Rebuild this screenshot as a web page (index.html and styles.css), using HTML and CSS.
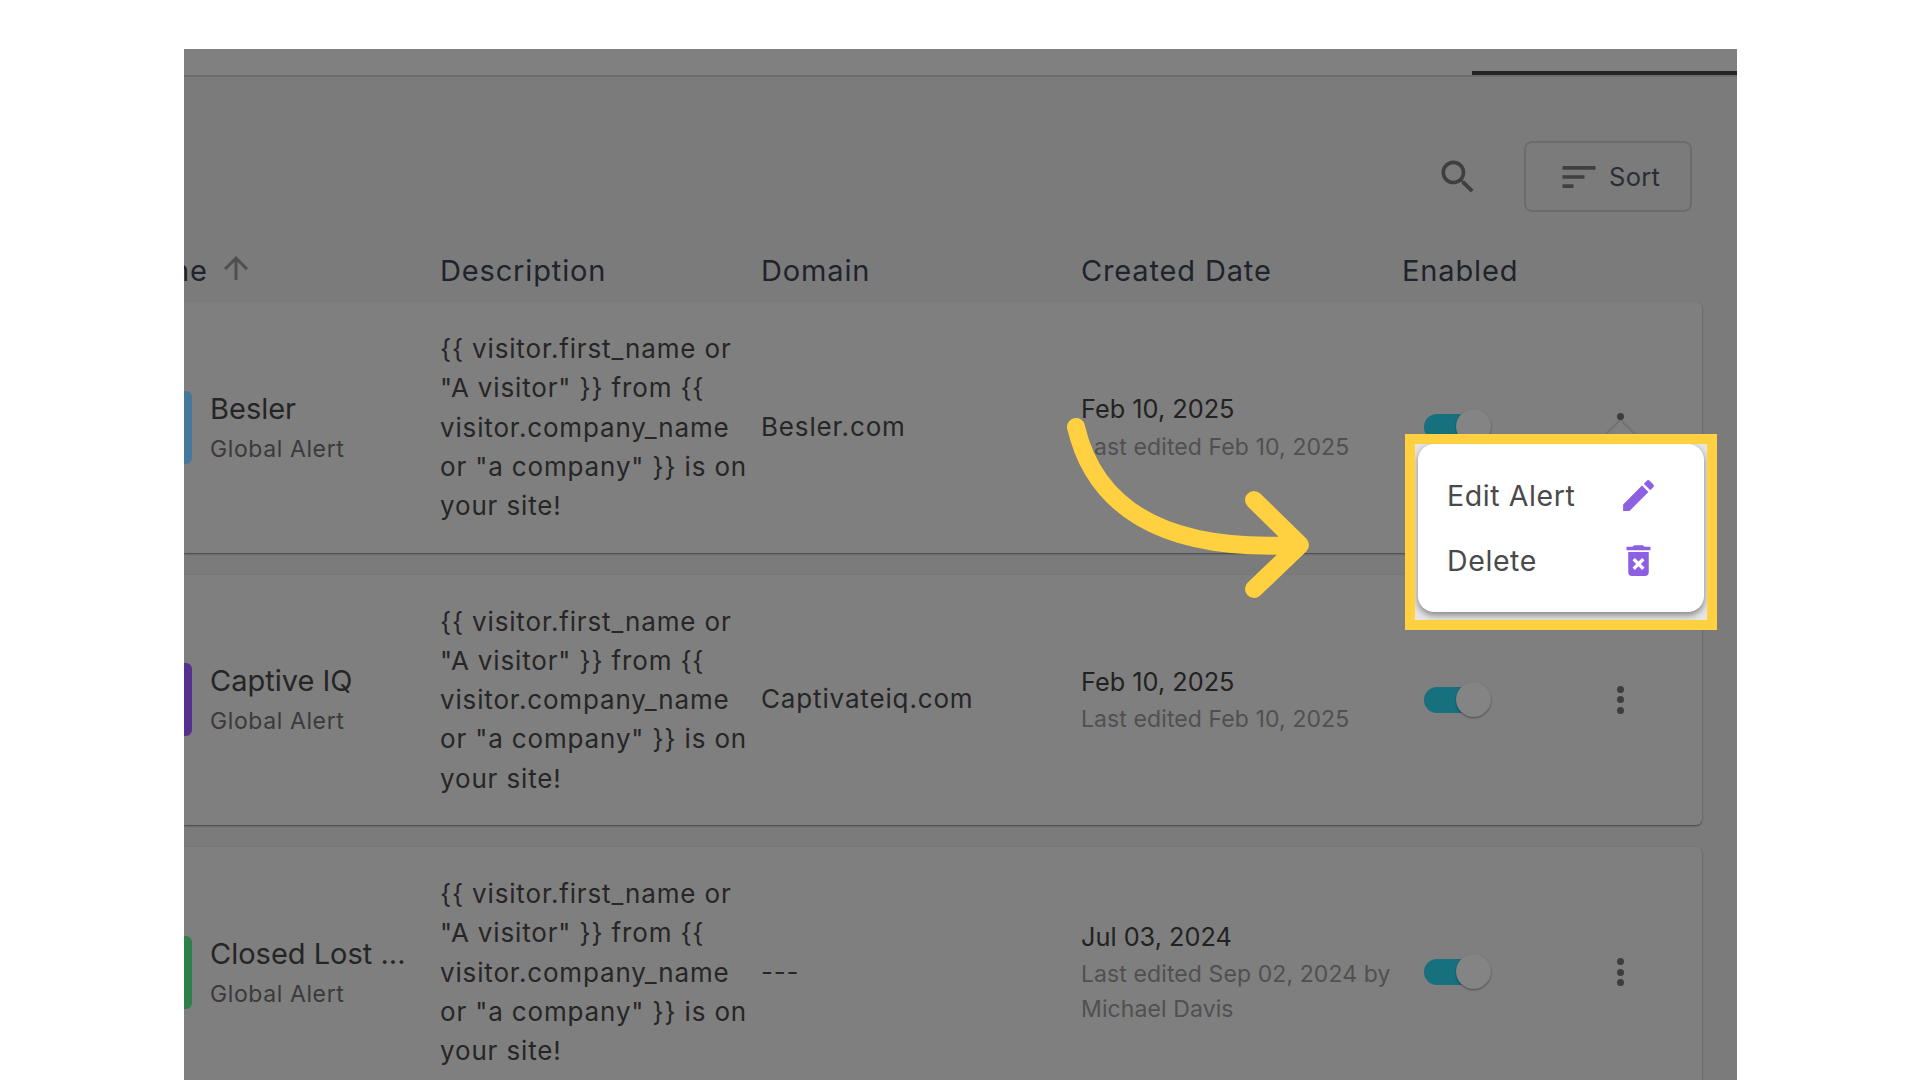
FILE: index.html
```html
<!DOCTYPE html>
<html>
<head>
    <title>Alerts</title>
    <link rel="stylesheet" href="styles.css">
</head>
<body>
    <div class="frame">
        <div class="tabs">
            <div class="tab-active"></div>
        </div>

        <div class="toolbar">
            <svg class="search-icon" viewBox="0 0 24 24"><path d="M15.5 14h-.79l-.28-.27C15.41 12.59 16 11.11 16 9.5 16 5.91 13.09 3 9.5 3S3 5.91 3 9.5 5.91 16 9.5 16c1.61 0 3.09-.59 4.23-1.57l.27.28v.79l5 4.99L20.49 19l-4.99-5zm-6 0C7.01 14 5 11.99 5 9.5S7.01 5 9.5 5 14 7.01 14 9.5 11.99 14 9.5 14z"/></svg>
            <button class="sort-btn">
                <svg class="sort-icon" viewBox="0 0 24 24"><path d="M3 6h18v2H3zM3 11h12v2H3zM3 16h6v2H3z"/></svg>
                <span>Sort</span>
            </button>
        </div>

        <div class="table-head">
            <div class="head-name">
                <span class="head-name-text">Name</span>
                <svg class="head-arrow" viewBox="0 0 24 24"><path d="M4 12l1.41 1.41L11 7.83V20h2V7.83l5.58 5.59L20 12l-8-8-8 8z"/></svg>
            </div>
            <div>Description</div>
            <div>Domain</div>
            <div>Created Date</div>
            <div>Enabled</div>
        </div>

        <div class="card">
            <div class="name-cell">
                <div class="bar bar-blue"></div>
                <div>
                    <div class="name">Besler</div>
                    <div class="sub">Global Alert</div>
                </div>
            </div>
            <div class="desc">{{ visitor.first_name or<br>"A visitor" }} from {{<br>visitor.company_name<br>or "a company" }} is on<br>your site!</div>
            <div class="domain">Besler.com</div>
            <div>
                <div class="date">Feb 10, 2025</div>
                <div class="edited">Last edited Feb 10, 2025</div>
            </div>
            <div class="toggle"><div class="knob"></div></div>
            <div class="kebab"><span></span><span></span><span></span></div>
        </div>

        <div class="card">
            <div class="name-cell">
                <div class="bar bar-purple"></div>
                <div>
                    <div class="name">Captive IQ</div>
                    <div class="sub">Global Alert</div>
                </div>
            </div>
            <div class="desc">{{ visitor.first_name or<br>"A visitor" }} from {{<br>visitor.company_name<br>or "a company" }} is on<br>your site!</div>
            <div class="domain">Captivateiq.com</div>
            <div>
                <div class="date">Feb 10, 2025</div>
                <div class="edited">Last edited Feb 10, 2025</div>
            </div>
            <div class="toggle"><div class="knob"></div></div>
            <div class="kebab"><span></span><span></span><span></span></div>
        </div>

        <div class="card">
            <div class="name-cell">
                <div class="bar bar-green"></div>
                <div>
                    <div class="name">Closed Lost ...</div>
                    <div class="sub">Global Alert</div>
                </div>
            </div>
            <div class="desc">{{ visitor.first_name or<br>"A visitor" }} from {{<br>visitor.company_name<br>or "a company" }} is on<br>your site!</div>
            <div class="domain">---</div>
            <div>
                <div class="date">Jul 03, 2024</div>
                <div class="edited">Last edited Sep 02, 2024 by<br>Michael Davis</div>
            </div>
            <div class="toggle"><div class="knob"></div></div>
            <div class="kebab"><span></span><span></span><span></span></div>
        </div>

        <div class="popper-arrow"></div>

        <div class="highlight">
            <div class="menu">
                <div class="menu-item">
                    <span>Edit Alert</span>
                    <svg class="menu-icon" viewBox="0 0 24 24"><path d="M3 17.25V21h3.75L17.81 9.94l-3.75-3.75L3 17.25zM20.71 7.04c.39-.39.39-1.02 0-1.41l-2.34-2.34c-.39-.39-1.02-.39-1.41 0l-1.83 1.83 3.75 3.75 1.83-1.83z"/></svg>
                </div>
                <div class="menu-item">
                    <span>Delete</span>
                    <svg class="menu-icon" viewBox="0 0 24 24"><path d="M6 19c0 1.1.9 2 2 2h8c1.1 0 2-.9 2-2V7H6v12zm2.46-7.12l1.41-1.41L12 12.59l2.12-2.12 1.41 1.41L13.41 14l2.12 2.12-1.41 1.41L12 15.41l-2.12 2.12-1.41-1.41L10.59 14l-2.13-2.12zM15.5 4l-1-1h-5l-1 1H5v2h14V4z"/></svg>
                </div>
            </div>
        </div>

        <svg class="callout-arrow" viewBox="0 0 270 210">
            <path d="M22 18C40 95 105 143 240 136M200 91L246 136L200 180"/>
        </svg>
    </div>
</body>
</html>
```

FILE: styles.css
```css
html, body {
    height: 100%;
}
body {
    margin: 0;
    background: white;
    overflow: hidden;
    font-family: Inter, "Noto Sans", sans-serif;
}
.frame {
    position: relative;
    width: 1553px;
    height: 1031px;
    margin: 49px 0 0 184px;
    background: #7b7b7b;
    overflow: hidden;
}
.tabs {
    display: flex;
    justify-content: flex-end;
    height: 28px;
    background: #808080;
    border-bottom: 2px solid #6d6d6d;
    box-sizing: border-box;
}
.tab-active {
    width: 265px;
    height: 26px;
    border-bottom: 4px solid #252525;
    box-sizing: border-box;
}
.toolbar {
    display: flex;
    align-items: center;
    justify-content: flex-end;
    padding: 64px 45px 0 0;
}
.search-icon {
    width: 44px;
    height: 44px;
    fill: #3f3f3f;
    margin-right: 44px;
}
.sort-btn {
    display: flex;
    align-items: center;
    width: 168px;
    height: 71px;
    padding: 0 0 0 31px;
    background: none;
    border: 2px solid #6c6c6c;
    border-radius: 8px;
    color: #2b2d35;
    font: 400 25.5px Inter, sans-serif;
    letter-spacing: 0.3px;
}
.sort-icon {
    width: 44px;
    height: 44px;
    fill: #404040;
    margin-right: 8px;
}
.table-head {
    display: grid;
    grid-template-columns: 256px 321px 320px 321px 200px;
    align-items: center;
    width: 1518px;
    height: 90px;
    padding-top: 27px;
    box-sizing: border-box;
    color: #20232c;
    font-size: 29px;
    letter-spacing: 0.85px;
}
.head-name {
    display: flex;
    align-items: center;
    margin-left: -60px;
}
.head-name-text {
    margin-right: 10px;
}
.head-arrow {
    width: 36px;
    height: 36px;
    fill: #4f4f4f;
    margin-top: -6px;
}
.card {
    display: grid;
    grid-template-columns: 256px 321px 320px 343px 178px 36px;
    align-items: center;
    width: 1518px;
    height: 250.5px;
    margin-bottom: 22px;
    background: #7f7f7f;
    border-radius: 0 6px 6px 0;
    box-shadow: 0 1px 2px rgba(0,0,0,0.45);
}
.name-cell {
    display: flex;
    align-items: center;
    gap: 18px;
}
.bar {
    width: 8px;
    height: 73px;
    border-radius: 0 6px 6px 0;
}
.bar-blue {
    background: #44799b;
}
.bar-purple {
    background: #55308c;
}
.bar-green {
    background: #2f7f4b;
}
.name {
    color: #252525;
    font-size: 29px;
    line-height: 40px;
}
.sub {
    color: #3a3a3a;
    font-size: 23px;
    letter-spacing: 0.6px;
    line-height: 34px;
    margin-top: 3px;
}
.desc {
    color: #262626;
    font-size: 26px;
    letter-spacing: 0.85px;
    line-height: 39.3px;
    white-space: nowrap;
}
.domain {
    color: #262626;
    font-size: 26px;
    letter-spacing: 0.85px;
    padding-bottom: 2px;
}
.date {
    color: #222;
    font-size: 25.3px;
    line-height: 36px;
    margin-top: 1.6px;
}
.edited {
    color: #505050;
    font-size: 23px;
    letter-spacing: 0.1px;
    line-height: 35px;
    margin-top: 2.2px;
    white-space: nowrap;
}
.toggle {
    position: relative;
    width: 56px;
    height: 26px;
    background: #16707e;
    border-radius: 13px;
}
.knob {
    position: absolute;
    left: 32px;
    top: -5px;
    width: 35px;
    height: 35px;
    background: #848484;
    border-radius: 50%;
    box-shadow: 0 1px 2px rgba(0,0,0,0.4);
}
.kebab {
    display: flex;
    flex-direction: column;
    align-items: center;
    gap: 3.5px;
}
.kebab span {
    width: 7px;
    height: 7px;
    background: #3d3d3d;
    border-radius: 50%;
}
.popper-arrow {
    position: absolute;
    left: 1426px;
    top: 376px;
    width: 21px;
    height: 21px;
    background: #808080;
    transform: rotate(45deg);
    box-shadow: -1px -1px 2px rgba(0,0,0,0.2);
}
.highlight {
    position: absolute;
    left: 1221px;
    top: 385px;
    width: 312px;
    height: 196px;
    box-sizing: border-box;
    border: 10px solid #ffd03f;
    background: #e6e6e6;
    overflow: hidden;
}
.menu {
    height: 168px;
    margin: 0 3px;
    padding: 19px 45px 19px 29px;
    box-sizing: border-box;
    background: white;
    border-radius: 16px;
    box-shadow: 0 3px 7px rgba(0,0,0,0.45);
}
.menu-item {
    display: flex;
    align-items: center;
    justify-content: space-between;
    height: 65px;
    color: #4a4a4a;
    font-size: 28.5px;
    letter-spacing: 0.6px;
}
.menu-icon {
    width: 41px;
    height: 41px;
    fill: #8c5fe3;
}
.callout-arrow {
    position: absolute;
    left: 870px;
    top: 360px;
    width: 270px;
    height: 210px;
    fill: none;
    stroke: #ffd03f;
    stroke-width: 18px;
    stroke-linecap: round;
    stroke-linejoin: round;
}
```
